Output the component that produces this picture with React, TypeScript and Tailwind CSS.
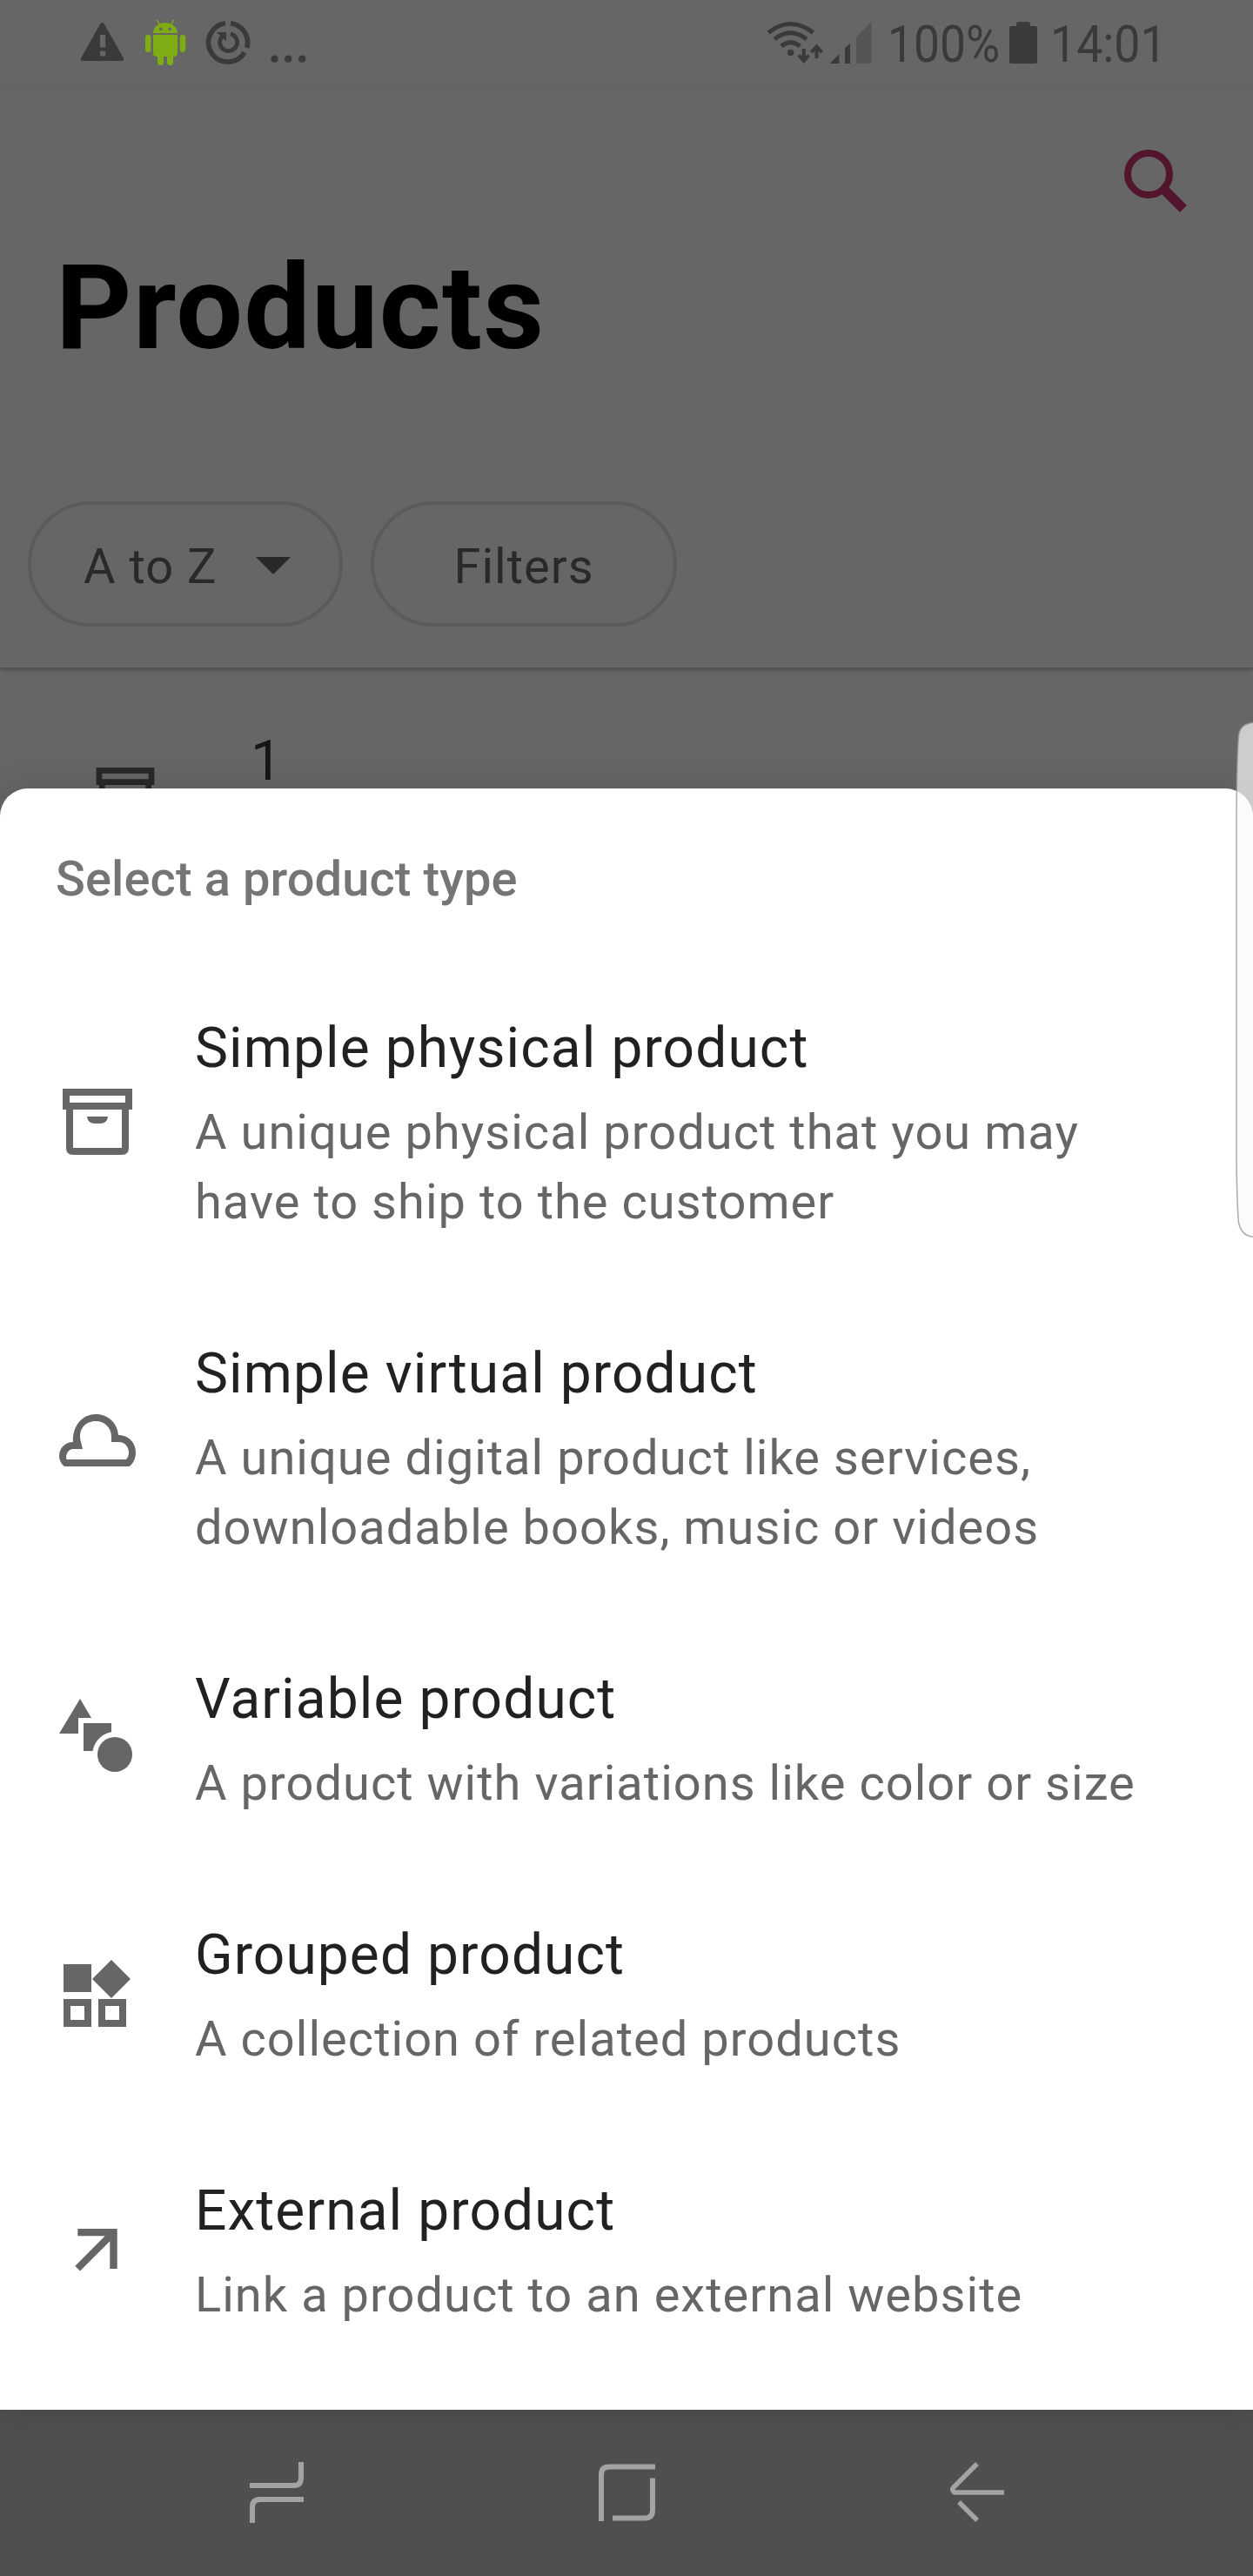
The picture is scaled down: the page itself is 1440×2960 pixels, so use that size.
import type { ReactNode } from "react";

const Box = () => (
  <>
    <path d="M12 16H84M12 16V32H84V16" fill="none" stroke="currentColor" strokeWidth="8" strokeLinecap="square" />
    <path d="M16 34V80Q16 84 20 84H76Q80 84 80 80V34" fill="none" stroke="currentColor" strokeWidth="8" />
    <path d="M36 44H60Q59 52 51 52H45Q37 52 36 44Z" />
  </>
);

const products: { title: string; lines: string[]; icon: ReactNode }[] = [
  {
    title: "Simple physical product",
    lines: ["A unique physical product that you may", "have to ship to the customer"],
    icon: <Box />,
  },
  {
    title: "Simple virtual product",
    lines: ["A unique digital product like services,", "downloadable books, music or videos"],
    icon: (
      <path
        fillRule="evenodd"
        d="M10 72C6 69 4 64 4 60C4 51 11 44 20 44C19 26 30 12 46 12C60 12 71 22 72 36C84 36 92 45 92 56C92 63 89 69 84.500 72ZM12.500 64H81C83 62 84 59 84 56C84 49 79 44 73 44H64V38C64 27 56 20 46 20C34 20 26 29 28.500 42L31 52H20C14 52 11 59 12.500 64Z"
      />
    ),
  },
  {
    title: "Variable product",
    lines: ["A product with variations like color or size"],
    icon: (
      <>
        <path d="M28 5L41 27H26V45H4Z" />
        <path d="M32 33H64V43.300A26 26 0 0 0 42.600 65H32Z" />
        <circle cx="68" cy="69" r="20" />
      </>
    ),
  },
  {
    title: "Grouped product",
    lines: ["A collection of related products"],
    icon: (
      <path
        fillRule="evenodd"
        d="M9 16H41V48H9ZM64 11L86 33L64 55L42 33ZM9 56H41V88H9ZM17 64V80H33V64ZM49 56H81V88H49ZM57 64V80H73V64Z"
      />
    ),
  },
  {
    title: "External product",
    lines: ["Link a product to an external website"],
    icon: <path d="M25.300 26H70.700V72H62.300V40.300L28 74.500L22.300 68.700L56.700 34.300H25.300Z" />,
  },
];

function StatusBar() {
  return (
    <div className="flex h-[100px] items-start text-[#3a3a3a]">
      <svg className="h-[100px] w-[380px]" viewBox="0 0 380 100" fill="currentColor">
        <path d="M115.500 27Q117.500 25 119.500 27L142 67Q143 70 140 70H95Q92 70 93 67ZM115 40V54.500H121.200V40ZM115 58.500V64.500H121.200V58.500Z" fillRule="evenodd" />
        <g fill="#7fac12">
          <path d="M176 38C176 31 183 26 190 26C197 26 204 31 204 38ZM176 40H204V61Q204 65 200 65H199V71.500A3.500 3.500 0 0 1 192 71.500V65H188V71.500A3.500 3.500 0 0 1 181 71.500V65H180Q176 65 176 61Z" />
          <rect x="167" y="40" width="6.500" height="20" rx="3.200" />
          <rect x="206.700" y="40" width="6.500" height="20" rx="3.200" />
          <path d="M180.500 23L183.500 28.500M199.500 23L196.500 28.500" stroke="#7fac12" strokeWidth="1.500" />
        </g>
        <circle cx="184.800" cy="33.300" r="1.900" fill="#666" />
        <circle cx="195.200" cy="33.300" r="1.900" fill="#666" />
        <g fill="none" stroke="currentColor" strokeWidth="5.600">
          <path d="M265 26.700A22.300 22.300 0 0 1 283.700 55M281 60.300A22.300 22.300 0 1 1 259 26.700" />
          <path d="M265 38.800A10 10 0 1 1 255 42" strokeWidth="4.800" />
        </g>
        <path d="M249 37H260V47.500Z" />
        <circle cx="315.500" cy="67.700" r="4.100" />
        <circle cx="331.200" cy="67.700" r="4.100" />
        <circle cx="347.200" cy="67.700" r="4.100" />
      </svg>
      <svg className="ml-[480px] h-[100px] w-[160px]" viewBox="860 0 160 100" fill="currentColor">
        <g fill="none" stroke="currentColor" strokeWidth="5">
          <path d="M883 37.500Q908.500 17.500 934.500 37.500" />
          <path d="M890 45Q908.500 30.500 927 45" />
          <path d="M898 53Q908.500 44.500 919.500 53" />
          <path d="M923.700 56V70M918 63.500L923.700 70L929.500 63.500M938.500 67V54M932.500 60L938.500 53.500L944.500 60" strokeWidth="4" />
        </g>
        <circle cx="908.600" cy="60.500" r="3.700" />
        <path d="M953.500 73L964.500 62V73ZM971 55L977 50V73H971Z" />
        <path d="M984 42.500L1001.500 25V73H984Z" fill="#555" />
      </svg>
      <div className="w-[136px] pt-px">
        <div className="origin-left scale-x-[0.89] pt-[12px] text-[60px] leading-[76px] whitespace-nowrap">100%</div>
      </div>
      <svg className="h-[100px] w-[40px]" viewBox="1156 0 40 100" fill="currentColor">
        <path d="M1162 30H1168V28Q1168 25 1171 25H1181Q1184 25 1184 28V30H1190Q1192 30 1192 32V71Q1192 73 1190 73H1162Q1160 73 1160 71V32Q1160 30 1162 30Z" />
      </svg>
      <div className="ml-[11px] w-[130px] pt-px">
        <div className="origin-left scale-x-[0.895] pt-[12px] text-[60px] leading-[76px] whitespace-nowrap">14:01</div>
      </div>
    </div>
  );
}

function ProductsScreen() {
  return (
    <div className="h-[2769px] overflow-hidden bg-[#666]">
      <StatusBar />
      <header className="flex h-[668px] flex-col border-b border-[#505050] shadow-[0_2px_5px_rgba(0,0,0,0.25)]">
        <div className="flex h-[160px] justify-end pt-[60px] pr-[64px]">
          <svg className="h-[96px] w-[96px]" viewBox="1280 160 96 96" fill="none" stroke="#53152d" strokeWidth="8">
            <circle cx="1320" cy="200" r="24" />
            <path d="M1336 216L1360 240" strokeWidth="11" />
          </svg>
        </div>
        <h1 className="pt-[14px] pl-[64px] text-[136px] leading-[160px] font-bold tracking-[1.36px] text-black">
          Products
        </h1>
        <div className="mt-[142px] flex gap-[32px] pl-[32px] text-[56px] leading-[80px] tracking-[1px] text-[#292929]">
          <button className="flex h-[144px] w-[362px] items-center rounded-full border-4 border-[#5b5b5b] pl-[60px]">
            <span className="w-[198px] pt-[6px] text-left">A to Z</span>
            <svg className="mt-[4px] h-[20px] w-[40px]" viewBox="0 0 40 20" fill="currentColor">
              <path d="M0 0H40L20 20Z" />
            </svg>
          </button>
          <button className="h-[144px] w-[352px] rounded-full border-4 border-[#5b5b5b] pt-[6px]">Filters</button>
        </div>
      </header>
      <div className="flex pl-[104px] text-[#282828]">
        <svg className="mt-[104px] h-[80px] w-[80px]" viewBox="0 0 96 96" fill="currentColor">
          <Box />
        </svg>
        <div className="mt-[67px] ml-[104px] text-[64px] leading-[80px] text-[#161616]">1</div>
      </div>
    </div>
  );
}

function ProductTypeSheet() {
  return (
    <section className="absolute inset-x-0 top-[906px] h-[1863px] rounded-t-[32px] bg-white shadow-[0_0_40px_rgba(0,0,0,0.14)]">
      <h2 className="h-[194px] pt-[64px] pl-[64px] text-[56px] leading-[80px] font-medium tracking-[0.1px] text-[#757575]">
        Select a product type
      </h2>
      {products.map((p) => (
        <div key={p.title} className="flex items-center pl-[64px]">
          <svg className="h-[96px] w-[96px] text-[#666]" viewBox="0 0 96 96" fill="currentColor">
            {p.icon}
          </svg>
          <div className="pt-[65px] pb-[53px] pl-[64px] whitespace-nowrap">
            <div className="text-[64px] leading-[80px] tracking-[1.1px] text-[#212121]">{p.title}</div>
            <div className="mt-[16px] text-[56px] leading-[80px] tracking-[1.03px] text-[#666]">
              {p.lines.map((line) => (
                <div key={line}>{line}</div>
              ))}
            </div>
          </div>
        </div>
      ))}
    </section>
  );
}

function NavigationBar() {
  return (
    <nav className="flex h-[191px] items-start justify-between bg-[#4f4f4f] pt-[56px] pr-[282px] pl-[283px] text-[#a3a3a3]">
      <svg className="h-[80px] w-[70px]" viewBox="283 2825 70 80" fill="none" stroke="currentColor" strokeWidth="6">
        <path d="M287 2856H338Q346 2856 346 2847V2829M349 2872H299Q290 2872 290 2881V2899" />
      </svg>
      <svg className="h-[80px] w-[74px]" viewBox="684 2825 74 80" fill="none" stroke="currentColor" strokeWidth="6">
        <path d="M753 2834.500H700Q691 2834.500 691 2843.500V2897M704 2893.500H741Q750 2893.500 750 2884.500V2847.500" />
      </svg>
      <svg className="h-[80px] w-[70px]" viewBox="1088 2825 70 80" fill="none" stroke="currentColor" strokeWidth="5.500">
        <path d="M1154 2864H1097Q1093 2861 1096 2858L1123 2831M1102 2875L1123 2896" />
      </svg>
    </nav>
  );
}

function EdgeHandle() {
  return (
    <svg className="absolute top-[828px] right-0 h-[596px] w-[22px]" viewBox="1418 828 22 596">
      <path
        d="M1442 830.500Q1425 831 1423.500 846Q1421.500 870 1421 940V1330Q1421.500 1385 1423.500 1405Q1427 1421 1442 1421.500Z"
        fill="#f9f9f9"
        fillOpacity="0.7"
        stroke="#999"
        strokeOpacity="0.8"
        strokeWidth="1.500"
      />
    </svg>
  );
}

export default function App() {
  return (
    <div className="relative h-[2960px] w-[1440px] overflow-hidden font-['Roboto',sans-serif]">
      <ProductsScreen />
      <ProductTypeSheet />
      <NavigationBar />
      <EdgeHandle />
    </div>
  );
}
